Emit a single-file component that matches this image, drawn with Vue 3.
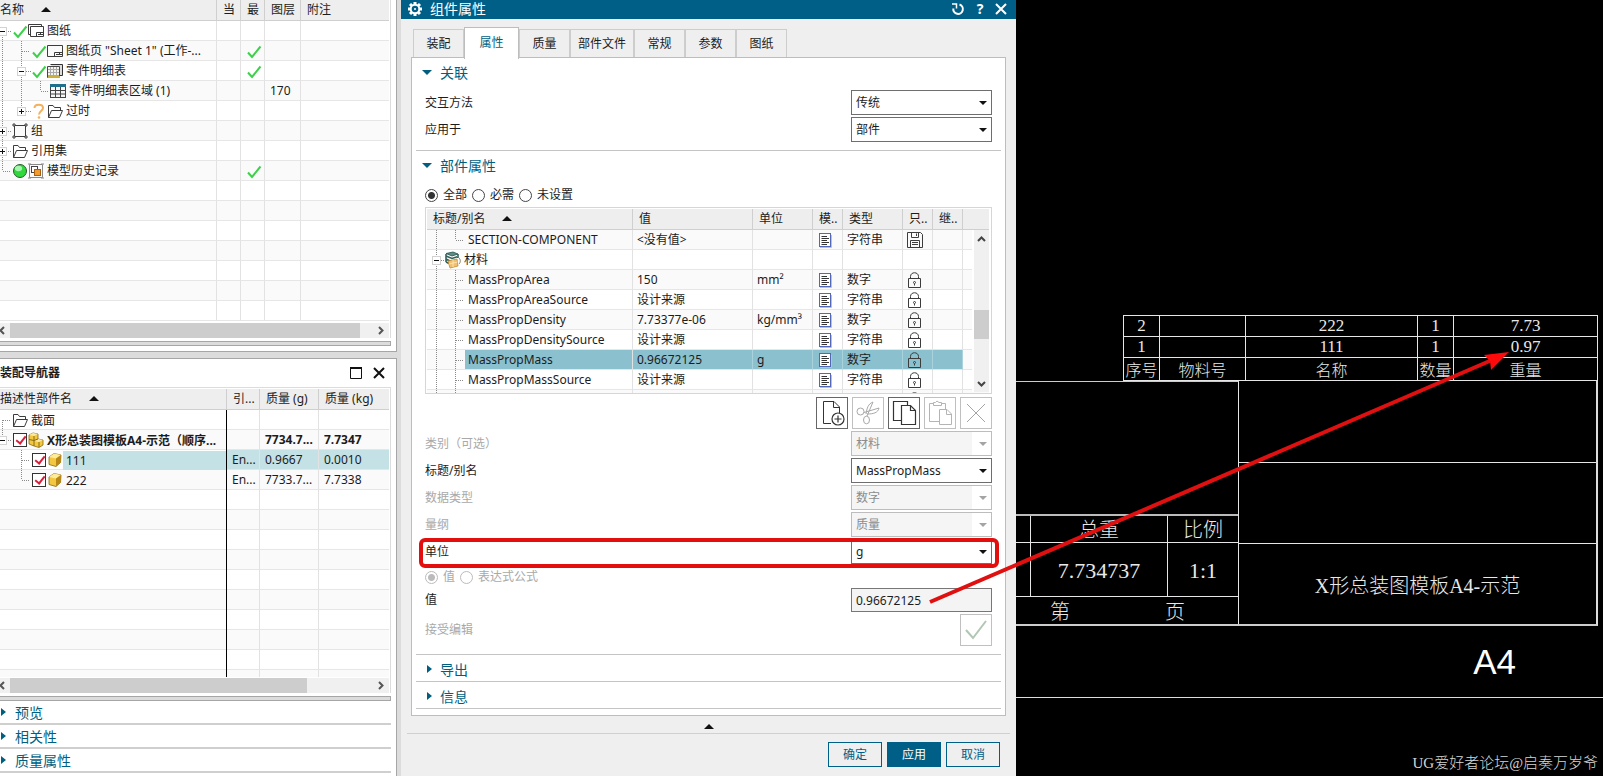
<script setup>
import { h, ref } from 'vue'

const el = (tag, attrs) => h(tag, attrs)
const line = { fill: 'none', stroke: '#3c3c3c', 'stroke-width': 1 }

const shapes = {
  check: [el('path', { d: 'M2 9.5L6 14L14.500 3.500', fill: 'none', stroke: '#3fd04b', 'stroke-width': 2 })],
  sheets: [
    el('path', { d: 'M2.500 11.500H0.500V1.500H13.500V3', ...line }),
    el('path', { d: 'M2.500 3.500H15.500V13.500H2.500Z', ...line }),
    el('path', { d: 'M8.500 13V9.500H15M10 11.500H15M12.500 10V11.500', ...line })
  ],
  sheet: [
    el('path', { d: 'M0.500 2.500H15.500V13.500H0.500Z', ...line }),
    el('path', { d: 'M7.500 13V9.500H15M9 11.500H15M12.500 10V11.500', ...line })
  ],
  parts: [
    el('path', { d: 'M3.500 1.500H15.500V12.500H12.500', fill: '#ddd', stroke: '#333', 'stroke-width': 1 }),
    el('path', { d: 'M0.500 3.500H12.500V14.500H0.500Z', fill: '#f4f4ee', stroke: '#444', 'stroke-width': 1 }),
    el('path', { d: 'M1 6.500H12M1 9.500H12M1 12.500H12M3.500 4V14M6.500 4V14M9.500 4V14', fill: 'none', stroke: '#aaa', 'stroke-width': 1 }),
    el('path', { d: 'M1 14H13', stroke: '#c9b13c', 'stroke-width': 2 })
  ],
  grid: [
    el('rect', { x: 0.5, y: 1.5, width: 15, height: 13, fill: '#f6f6f6', stroke: '#444' }),
    el('rect', { x: 0, y: 1, width: 16, height: 3, fill: '#1f6f8d' }),
    el('path', { d: 'M0 7.500H16M0 11H16M5.500 4V15M10.500 4V15', fill: 'none', stroke: '#444', 'stroke-width': 1 })
  ],
  folder: [
    el('path', { d: 'M1.500 14.500V2.500H6L7.500 4.500H13.500V7.500', ...line }),
    el('path', { d: 'M1.500 14.500L4.500 7.500H15.500L12.500 14.500Z', ...line })
  ],
  question: [
    el('path', { d: 'M3.500 5C3.500 0.500 12 0.500 12 5C12 8 8 8 8 11.500', fill: 'none', stroke: '#f3b15c', 'stroke-width': 2 }),
    el('circle', { cx: 8, cy: 14.5, r: 1.3, fill: '#f3b15c' })
  ],
  group: [
    el('path', { d: 'M2.500 2.500H13.500V13.500H2.500Z', ...line }),
    el('path', { d: 'M1 1H3V3H1ZM13 1H15V3H13ZM1 13H3V15H1ZM13 13H15V15H13Z', fill: '#fff', stroke: '#3c3c3c', 'stroke-width': 1 })
  ],
  ball: [
    el('circle', { cx: 8, cy: 8, r: 6.5, fill: '#2fd83c', stroke: '#2b5a2e' }),
    el('ellipse', { cx: 6.5, cy: 5.5, rx: 3.6, ry: 2.8, fill: '#a8f5ad' })
  ],
  history: [
    el('path', { d: 'M1.500 3V1.500H14.500V14.500H1.500V3M0 1H3M13 1H16M0 15H3M13 15H16', fill: 'none', stroke: '#888', 'stroke-width': 1 }),
    el('rect', { x: 3.5, y: 3.5, width: 6, height: 6, fill: '#fff', stroke: '#444' }),
    el('rect', { x: 6.5, y: 6.5, width: 6, height: 6, fill: '#f29a2e', stroke: '#a85f10' })
  ],
  cube: [
    el('path', { d: 'M2 5L7 1.500L14 3L13.500 10.500L9 14.500L2 12.500Z', fill: '#f3c840', stroke: '#8a6a12', 'stroke-width': 0.8 }),
    el('path', { d: 'M2 5L9 6.500L14 3L7 1.500Z', fill: '#fdeb9c' }),
    el('path', { d: 'M9 6.500L14 3L13.500 10.500L9 14.500Z', fill: '#b98716' })
  ],
  assembly: [
    el('path', { d: 'M1 3L5 1L10 2V7L15 8V13L11 15.500L6 14L1 12Z', fill: '#f3c840', stroke: '#8a6a12', 'stroke-width': 0.8 }),
    el('path', { d: 'M1 3L6 4L10 2L5 1ZM6 9L11 10L15 8L10 7Z', fill: '#fdeb9c' }),
    el('path', { d: 'M6 4V14M1 7.500L6 8.500L10 7M11 10V15', fill: 'none', stroke: '#8a6a12', 'stroke-width': 1 })
  ],
  material: [
    el('path', { d: 'M1 1.500L8 0L13 2L7 4Z', fill: '#5d8c86', stroke: '#26504c', 'stroke-width': 0.8 }),
    el('path', { d: 'M1 4L7 6.500L13 4.500M1 7L6 9.500M1 10L4 11.500M1 2V10M13 2V6', fill: 'none', stroke: '#33625d', 'stroke-width': 1.6 }),
    el('path', { d: 'M3 9L12 7L13 14L5 16Z', fill: '#f0c070', stroke: '#c48a2f', 'stroke-width': 0.8 }),
    el('path', { d: 'M4 12L12.500 10M8 8V15', fill: 'none', stroke: '#fbe3b0', 'stroke-width': 1 }),
    el('path', { d: 'M12 4C16 7 16 10 14 12', fill: 'none', stroke: '#8a7a50', 'stroke-width': 1 })
  ],
  doc: [
    el('path', { d: 'M3 15.500H14.500V3', fill: 'none', stroke: '#b4bfe8', 'stroke-width': 1 }),
    el('rect', { x: 2.5, y: 1.5, width: 11, height: 13, fill: '#fff', stroke: '#5267b5' }),
    el('path', { d: 'M4.500 4.500H10M4.500 6.500H12M4.500 8.500H10M4.500 10.500H12M4.500 12.500H10', fill: 'none', stroke: '#333', 'stroke-width': 1 })
  ],
  lock: [
    el('path', { d: 'M1.500 6.500H13.500V15.500H1.500Z', ...line }),
    el('path', { d: 'M3.500 6.500V4.500C3.500 -0.500 11.500 -0.500 11.500 4.500V6.500', ...line }),
    el('path', { d: 'M7.500 12V13.500', ...line }),
    el('circle', { cx: 7.5, cy: 10.5, r: 1, ...line })
  ],
  disk: [
    el('path', { d: 'M0.500 0.500H13.500L15.500 2.500V15.500H0.500Z', ...line }),
    el('path', { d: 'M4.500 0.500V5.500H11.500V0.500M9.500 1.500V4M3.500 15.500V8.500H12.500V15.500M5 10.500H11M5 12.500H11', ...line })
  ]
}
const Icon = (props) => h('svg', { width: 16, height: 16, viewBox: '0 0 16 16', 'aria-hidden': 'true', overflow: 'visible' }, shapes[props.name])
Icon.props = ['name']

/* Tree guide: v = [x, top, bottom] dotted verticals, b = [x, sign] toggle box */
const Guide = (props) => {
  const g = props.g
  const dots = { stroke: '#8a8a8a', 'stroke-width': 1, 'stroke-dasharray': '1 1' }
  const parts = g.v.map(([x, a, b]) => el('path', { d: `M${x + 0.5} ${a}V${b}`, ...dots }))
  if (g.h) parts.push(el('path', { d: `M${g.h[0]} 10.500H${g.h[1]}`, ...dots }))
  if (g.b) {
    const x = g.b[0] + 0.5
    parts.push(el('rect', { x: x - 4, y: 6.5, width: 8, height: 8, fill: '#fff', stroke: '#d2d2d2' }))
    parts.push(el('path', { d: `M${x - 2.5} 10.500H${x + 2.5}` + (g.b[1] === '+' ? `M${x} 8V13` : ''), stroke: '#111', 'stroke-width': 1 }))
  }
  return h('svg', { width: g.w, height: 20, viewBox: `0 0 ${g.w} 20`, overflow: 'visible', 'aria-hidden': 'true' }, parts)
}
Guide.props = ['g']

const drawingRows = [
  { g: { w: 12, v: [[2, 10, 20]], h: [8, 12], b: [2, '-'] }, icons: ['check', 'sheets'], name: '图纸' },
  { g: { w: 31, v: [[2, 0, 20], [21, 0, 20]], h: [22, 30] }, icons: ['check', 'sheet'], name: '图纸页 "Sheet 1" (工作-...', ok: true },
  { g: { w: 31, v: [[2, 0, 20], [21, 0, 20]], h: [26, 31], b: [21, '-'] }, icons: ['check', 'parts'], name: '零件明细表', ok: true },
  { g: { w: 50, v: [[2, 0, 20], [21, 0, 20], [40, 0, 10]], h: [41, 49] }, icons: ['grid'], name: '零件明细表区域 (1)', layer: '170' },
  { g: { w: 31, v: [[2, 0, 20], [21, 0, 10]], h: [26, 31], b: [21, '+'] }, icons: ['question', 'folder'], name: '过时' },
  { g: { w: 12, v: [[2, 0, 20]], h: [8, 12], b: [2, '+'] }, icons: ['group'], name: '组' },
  { g: { w: 12, v: [[2, 0, 20]], h: [8, 12], b: [2, '+'] }, icons: ['folder'], name: '引用集' },
  { g: { w: 12, v: [[2, 0, 10]], h: [3, 11] }, icons: ['ball', 'history'], name: '模型历史记录', ok: true }
]
const partRows = [
  { g: { w: 12, v: [[2, 10, 20]], h: [3, 11] }, icon: 'folder', name: '截面' },
  { g: { w: 12, v: [[2, 0, 8]], h: [8, 12], b: [2, '-'] }, box: true, icon: 'assembly', name: 'X形总装图模板A4-示范（顺序...', ref: '', grams: '7734.7...', kg: '7.7347', bold: true },
  { g: { w: 31, v: [[21, 0, 20]], h: [22, 30] }, box: true, icon: 'cube', name: '111', ref: 'En...', grams: '0.9667', kg: '0.0010', on: true },
  { g: { w: 31, v: [[21, 0, 10]], h: [22, 30] }, box: true, icon: 'cube', name: '222', ref: 'En...', grams: '7733.7...', kg: '7.7338' }
]
const child = { w: 38, v: [[9, 0, 20], [28, 0, 20]], h: [29, 37] }
const attrRows = [
  { g: { w: 38, v: [[9, 0, 20], [28, 0, 10]], h: [29, 37] }, name: 'SECTION-COMPONENT', value: '<没有值>', type: '字符串', mark: 'disk' },
  { g: { w: 18, v: [[9, 0, 20]], h: [14, 18], b: [9, '-'] }, name: '材料', folder: true },
  { g: child, name: 'MassPropArea', value: '150', unit: 'mm²', type: '数字', mark: 'lock' },
  { g: child, name: 'MassPropAreaSource', value: '设计来源', type: '字符串', mark: 'lock' },
  { g: child, name: 'MassPropDensity', value: '7.73377e-06', unit: 'kg/mm³', type: '数字', mark: 'lock' },
  { g: child, name: 'MassPropDensitySource', value: '设计来源', type: '字符串', mark: 'lock' },
  { g: child, name: 'MassPropMass', value: '0.96672125', unit: 'g', type: '数字', mark: 'lock', on: true },
  { g: child, name: 'MassPropMassSource', value: '设计来源', type: '字符串', mark: 'lock' },
  { g: { w: 38, v: [[9, 0, 20], [28, 0, 20]] }, name: '', type: '', mark: 'lock' }
]
const tabs = ['装配', '属性', '质量', '部件文件', '常规', '参数', '图纸']
const activeTab = ref('属性')
const relation = [
  { id: 'method', label: '交互方法', value: '传统' },
  { id: 'target', label: '应用于', value: '部件' }
]
const fields = [
  { id: 'category', label: '类别（可选）', value: '材料', off: true },
  { id: 'alias', label: '标题/别名', value: 'MassPropMass' },
  { id: 'datatype', label: '数据类型', value: '数字', off: true },
  { id: 'dimension', label: '量纲', value: '质量', off: true },
  { id: 'unit', label: '单位', value: 'g' }
]
const filter = ref('全部')
const bom = [
  ['2', '', '222', '1', '7.73'],
  ['1', '', '111', '1', '0.97'],
  ['序号', '物料号', '名称', '数量', '重量']
]
</script>

<template>
  <main class="desk">
    <aside class="side">
      <section class="panel top">
        <div class="frame">
          <table class="tree">
            <colgroup><col /><col class="c24" /><col class="c24" /><col class="c36" /><col class="c88" /></colgroup>
            <thead>
              <tr><th class="first">名称<i class="sort"></i></th><th>当</th><th>最</th><th>图层</th><th>附注</th></tr>
            </thead>
            <tbody>
              <tr v-for="r in drawingRows" :key="r.name">
                <td class="first"><div class="node"><Guide :g="r.g" /><Icon v-for="i in r.icons" :key="i" :name="i" /><span class="name">{{ r.name }}</span></div></td>
                <td></td>
                <td><div v-if="r.ok" class="node"><Icon name="check" /></div></td>
                <td>{{ r.layer }}</td><td></td>
              </tr>
              <tr v-for="n in 7" :key="n"><td></td><td></td><td></td><td></td><td></td></tr>
            </tbody>
          </table>
          <div class="hbar">
            <svg width="10" height="15" viewBox="0 0 10 15"><path d="M4 4L0.500 7.500L4 11" fill="none" stroke="#555" stroke-width="2" /></svg>
            <span class="thumb long"></span>
            <svg class="end" width="16" height="15" viewBox="0 0 16 15"><path d="M6 4L9.500 7.500L6 11" fill="none" stroke="#555" stroke-width="2" /></svg>
          </div>
        </div>
        <div class="sash"></div>
      </section>

      <section class="panel bottom">
        <header class="dock">
          <strong>装配导航器</strong>
          <button type="button" aria-label="最大化"><svg width="12" height="12" viewBox="0 0 12 12"><path d="M0.500 1H11.500V11.500H0.500Z" fill="none" stroke="#111" /><path d="M0 1H12" stroke="#111" stroke-width="2" /></svg></button>
          <button type="button" aria-label="关闭"><svg width="12" height="12" viewBox="0 0 12 12"><path d="M1 1L11 11M11 1L1 11" stroke="#111" stroke-width="2" /></svg></button>
        </header>
        <div class="frame fill">
          <div class="clip">
            <table class="tree parts">
              <colgroup><col /><col class="c33" /><col class="c59" /><col class="c70" /></colgroup>
              <thead>
                <tr><th class="first">描述性部件名<i class="sort"></i></th><th>引...</th><th>质量 (g)</th><th>质量 (kg)</th></tr>
              </thead>
              <tbody>
                <tr v-for="r in partRows" :key="r.name" :class="{ bold: r.bold, on: r.on }">
                  <td class="first"><div class="node"><Guide :g="r.g" /><input v-if="r.box" type="checkbox" class="tick" checked :aria-label="r.name" /><Icon :name="r.icon" /><span class="name">{{ r.name }}</span></div></td>
                  <td>{{ r.ref }}</td><td>{{ r.grams }}</td><td>{{ r.kg }}</td>
                </tr>
                <tr v-for="n in 10" :key="n"><td></td><td></td><td></td><td></td></tr>
              </tbody>
            </table>
          </div>
          <div class="hbar">
            <svg width="10" height="15" viewBox="0 0 10 15"><path d="M4 4L0.500 7.500L4 11" fill="none" stroke="#555" stroke-width="2" /></svg>
            <span class="thumb short"></span>
            <svg class="end" width="16" height="15" viewBox="0 0 16 15"><path d="M6 4L9.500 7.500L6 11" fill="none" stroke="#555" stroke-width="2" /></svg>
          </div>
        </div>
        <div class="sash"></div>
        <button v-for="t in ['预览', '相关性', '质量属性']" :key="t" type="button" class="fold">{{ t }}</button>
      </section>
    </aside>

    <section class="dialog">
      <header class="title">
        <svg width="14" height="14" viewBox="0 0 14 14"><circle cx="7" cy="7" r="4.300" fill="none" stroke="#fff" stroke-width="2" /><circle cx="7" cy="7" r="1" fill="#fff" /><path d="M7 0V2.500M7 11.500V14M0 7H2.500M11.500 7H14M2 2L3.800 3.800M10.200 10.200L12 12M12 2L10.200 3.800M3.800 10.200L2 12" stroke="#fff" stroke-width="3" /></svg>
        <h1>组件属性</h1>
        <button type="button" aria-label="重置"><svg width="14" height="14" viewBox="0 0 14 14"><path d="M8.500 2.500A4.800 4.800 0 1 1 2.300 6.500" fill="none" stroke="#fff" stroke-width="2" /><path d="M1 2H5.500V6.500" fill="none" stroke="#fff" stroke-width="1.500" /></svg></button>
        <button type="button" class="help">?</button>
        <button type="button" aria-label="关闭"><svg width="12" height="12" viewBox="0 0 12 12"><path d="M1 1L11 11M11 1L1 11" stroke="#fff" stroke-width="2" /></svg></button>
      </header>
      <nav class="tabs">
        <button v-for="t in tabs" :key="t" type="button" :class="{ active: t === activeTab }" @click="activeTab = t">{{ t }}</button>
      </nav>
      <div class="sheet">
        <h2>关联</h2>
        <div v-for="f in relation" :key="f.id" class="field">
          <label :for="f.id">{{ f.label }}</label>
          <span class="pick"><select :id="f.id"><option>{{ f.value }}</option></select></span>
        </div>
        <hr class="after-fields" />
        <h2>部件属性</h2>
        <div class="radios">
          <label v-for="o in ['全部', '必需', '未设置']" :key="o"><input v-model="filter" type="radio" name="filter" :value="o" />{{ o }}</label>
        </div>
        <div class="attrs">
          <table>
            <colgroup><col /><col class="c120" /><col class="c60" /><col class="c30" /><col class="c60" /><col class="c30" /><col class="c30" /><col class="c26" /></colgroup>
            <thead>
              <tr><th class="first">标题/别名<i class="sort"></i></th><th>值</th><th>单位</th><th>模..</th><th>类型</th><th>只..</th><th>继..</th><th></th></tr>
            </thead>
            <tbody>
              <tr v-for="(r, i) in attrRows" :key="i" :class="{ on: r.on }">
                <td class="first"><div class="node"><Guide :g="r.g" /><Icon v-if="r.folder" name="material" /><span class="name">{{ r.name }}</span></div></td>
                <td>{{ r.value }}</td><td>{{ r.unit }}</td>
                <td><div v-if="r.type" class="node"><Icon name="doc" /></div></td>
                <td>{{ r.type }}</td>
                <td><div v-if="r.mark" class="node"><Icon :name="r.mark" /></div></td>
                <td></td><td class="last"></td>
              </tr>
            </tbody>
          </table>
          <div class="vbar">
            <svg width="15" height="18" viewBox="0 0 15 18"><path d="M4 11L7.500 7.500L11 11" fill="none" stroke="#444" stroke-width="2" /></svg>
            <span></span>
            <svg width="15" height="18" viewBox="0 0 15 18"><path d="M4 8L7.500 11.500L11 8" fill="none" stroke="#444" stroke-width="2" /></svg>
          </div>
        </div>
        <div class="tools">
          <button type="button" aria-label="新建"><svg width="30" height="30" viewBox="0 0 30 30"><path d="M14 25.500H6.500V3.500H17L22.500 9V15M16.500 4V9.500H22" fill="none" stroke="#333" /><circle cx="21" cy="21" r="6" fill="#fff" stroke="#333" stroke-width="1.200" /><path d="M17.500 21H24.500M21 17.500V24.500" stroke="#333" stroke-width="1.200" /></svg></button>
          <button type="button" disabled aria-label="剪切"><svg width="30" height="30" viewBox="0 0 30 30"><g fill="none" stroke="#a8a8a8"><circle cx="7.500" cy="13.500" r="3.500" /><ellipse cx="13.500" cy="22" rx="3" ry="3.800" /><path d="M11 14.500L26 10C25 15 20 16 14 16M14 18L20 4C15 6 14 10 13 16" /></g></svg></button>
          <button type="button" aria-label="复制"><svg width="30" height="30" viewBox="0 0 30 30"><path d="M4.500 3.500H18.500V22.500H4.500Z" fill="#fff" stroke="#333" stroke-width="1.200" /><path d="M12.500 7.500H21.500L26.500 12.500V26.500H12.500Z" fill="#fff" stroke="#333" stroke-width="1.200" /><path d="M21.500 8V12.500H26" fill="none" stroke="#333" stroke-width="1.200" /></svg></button>
          <button type="button" disabled aria-label="粘贴"><svg width="30" height="30" viewBox="0 0 30 30"><path d="M14 23.500H4.500V5.500H8M17 5.500H20.500V12M8.500 7.500V4.500H10.500L12 3L14 4.500H16.500V7.500ZM14.500 11.500H22L26.500 16V26.500H14.500ZM21.500 12V16.500H26" fill="none" stroke="#b4b4b4" /></svg></button>
          <button type="button" disabled aria-label="删除"><svg width="30" height="30" viewBox="0 0 30 30"><path d="M6 6L24 24M24 6L6 24" stroke="#a4a4a4" /></svg></button>
        </div>
        <div v-for="f in fields" :key="f.id" class="field" :class="{ off: f.off }">
          <label :for="f.id">{{ f.label }}</label>
          <span class="pick"><select :id="f.id" :disabled="f.off"><option>{{ f.value }}</option></select></span>
        </div>
        <div class="radios off">
          <label><input type="radio" name="kind" checked disabled />值</label>
          <label><input type="radio" name="kind" disabled />表达式公式</label>
        </div>
        <div class="field">
          <label for="value">值</label>
          <input id="value" class="text" type="text" value="0.96672125" readonly />
        </div>
        <div class="field off accept">
          <span>接受编辑</span>
          <button type="button" disabled aria-label="接受编辑"><svg width="30" height="30" viewBox="0 0 30 30"><path d="M5 15L12 23L25 6" fill="none" stroke="#b2c6b4" stroke-width="2" /></svg></button>
        </div>
        <hr />
        <button type="button" class="fold">导出</button>
        <hr />
        <button type="button" class="fold">信息</button>
        <hr />
      </div>
      <div class="collapse"><i class="sort"></i></div>
      <footer class="actions">
        <button type="button">确定</button>
        <button type="button" class="primary">应用</button>
        <button type="button">取消</button>
      </footer>
    </section>

    <section class="drawing">
      <table class="bom">
        <colgroup><col class="c36" /><col class="c86" /><col /><col class="c36" /><col class="c144" /></colgroup>
        <tbody>
          <tr v-for="r in bom" :key="r[0]"><td v-for="(c, i) in r" :key="i">{{ c }}</td></tr>
        </tbody>
      </table>
      <div class="block">
        <div class="left">
          <div class="blank"></div>
          <div class="cells">
            <span></span><span>总重</span><span>比例</span>
            <span></span><span class="num">7.734737</span><span class="num">1:1</span>
          </div>
          <div class="pageno"><span>第</span><span>页</span></div>
        </div>
        <div class="right">
          <div></div><div></div><div>X形总装图模板A4-示范</div>
        </div>
      </div>
      <div class="format">A4</div>
      <div class="mark">UG爱好者论坛@启奏万岁爷</div>
    </section>

    <svg class="notes" viewBox="0 0 1603 776" preserveAspectRatio="none" aria-hidden="true">
      <rect x="421" y="540" width="576" height="26" rx="4" fill="none" stroke="#e30f0f" stroke-width="4" />
      <path d="M930 602L1492 360" stroke="#e01010" stroke-width="4" />
      <path d="M1509 352L1484 355L1490 361L1491 370Z" fill="#ff0a0a" />
    </svg>
  </main>
</template>

<style>
body { margin: 0; background: #dcdcdc; }
</style>

<style scoped>
.desk { position: relative; display: grid; grid-template-columns: 401fr 615fr 587fr; height: 100vh; min-height: 776px; overflow: hidden; font: 12px/18px "Noto Sans", "Noto Sans CJK SC", sans-serif; color: #1c1c1c; }
.desk * { box-sizing: border-box; }
button, select, input { font: inherit; color: inherit; margin: 0; padding: 0; border: 0; background: none; border-radius: 0; }
svg { display: block; flex: none; }
table { width: 100%; table-layout: fixed; border-collapse: separate; border-spacing: 0; }
th { font-weight: 400; text-align: left; }
.c24 { width: 24px; } .c26 { width: 26px; } .c30 { width: 30px; } .c33 { width: 33px; } .c36 { width: 36px; } .c59 { width: 59px; } .c60 { width: 60px; }
.c70 { width: 70px; } .c86 { width: 86px; } .c88 { width: 88px; } .c120 { width: 120px; } .c144 { width: 144px; }

.side { display: flex; flex-direction: column; gap: 6px; background: #dcdcdc; padding-right: 4px; min-width: 0; min-height: 0; }
.panel { background: #fff; border-right: 1px solid #a6a6a6; padding-right: 5px; }
.top { border-bottom: 1px solid #a6a6a6; padding-bottom: 5px; }
.bottom { flex: 1; min-height: 0; border-top: 1px solid #a6a6a6; display: flex; flex-direction: column; padding-bottom: 3px; }
.frame { border-right: 1px solid #dcdcdc; padding-right: 1px; }
.fill { flex: 1; min-height: 0; display: flex; flex-direction: column; border-top: 1px solid #dcdcdc; padding-top: 1px; }
.clip { flex: 1; min-height: 0; overflow: hidden; }
.tree th, .attrs th { height: 21px; line-height: 20px; background: #eee; border-bottom: 1px solid #cfcfcf; border-right: 1px solid #cfcfcf; padding: 0 0 0 6px; white-space: nowrap; }
.tree td, .attrs td { height: 20px; line-height: 19px; border-bottom: 1px solid #e6e6e6; border-right: 1px solid #e2e2e2; padding: 0 0 0 5px; white-space: nowrap; overflow: hidden; }
.attrs td { padding-left: 4px; }
.tree tbody tr:nth-child(even), .attrs tbody tr:nth-child(odd) { background: #fafafa; }
.tree th:last-child, .tree td:last-child { border-right: 0; }
.tree th.first, .tree td.first, .attrs td.first { padding-left: 0; }
.sort { display: inline-block; border: 5px solid transparent; border-top: 0; border-bottom: 5px solid #111; margin-left: 17px; vertical-align: 2px; }
.node { display: flex; align-items: center; height: 19px; }
.name { flex: 1; padding-left: 3px; height: 19px; }
.parts .name { overflow: hidden; }
.parts tbody td:first-child { border-right: 1px solid #000; border-bottom: 0; box-shadow: inset 0 -1px #e6e6e6; }
.bold { font-weight: 700; }
.parts .on td:not(.first), .parts .on .name { background: #c4e1e5; }
.tick { appearance: none; flex: none; width: 14px; height: 14px; margin: 0 1px; border: 1px solid #333; background: #fff; position: relative; }
.tick:checked::after { content: ""; position: absolute; left: 4px; top: 0; width: 4px; height: 8px; border: solid #d81e3a; border-width: 0 2px 2px 0; transform: rotate(38deg); }
.hbar { display: flex; height: 15px; background: #f0f0f0; }
.top .hbar { margin-top: 2px; }
.bottom .hbar { margin-top: 1px; }
.thumb { background: #cdcdcd; }
.long { width: 350px; } .short { width: 297px; }
.end { margin-left: auto; }
.sash { height: 5px; margin-top: 3px; flex: none; background: #dcdcdc; border: 1px solid #a6a6a6; border-left: 0; }
.dock { height: 28px; display: flex; align-items: center; gap: 11px; padding-right: 6px; }
.dock strong { flex: 1; }
.fold { display: block; text-align: left; width: 100%; font-size: 14px; color: #005f7f; }
.fold::before { content: ""; display: inline-block; border: 4px solid transparent; border-left: 5px solid #005f7f; border-right: 0; margin-right: 9px; vertical-align: 2px; }
.bottom > .fold { flex: none; height: 24px; line-height: 20px; padding: 2px 0 0 1px; border-bottom: 2px solid #cfcfcf; }

.dialog { background: #efefef; display: flex; flex-direction: column; min-width: 0; }
.title { height: 19px; background: #005f87; color: #fff; display: flex; align-items: center; gap: 8px; padding: 0 9px 2px 7px; }
.title h1 { font-size: 14px; line-height: 17px; font-weight: 400; margin: 0; flex: 1; }
.help { font-weight: 700; font-size: 14px; line-height: 17px; width: 14px; }
.tabs { display: flex; align-items: flex-end; height: 38px; padding-left: 12px; }
.tabs button { min-width: 51px; height: 28px; padding: 0 7px; border: 1px solid #cdcdcd; border-bottom: 0; }
.tabs .active { min-width: 55px; height: 32px; margin-bottom: -2px; background: #fff; color: #005f7f; border-color: #bdbdbd; z-index: 1; padding-bottom: 2px; }
.sheet { background: #fff; border: 1px solid #bdbdbd; margin: 0 10px; padding: 0 13px 6px; }
h2 { margin: 0; height: 32px; font-size: 14px; line-height: 30px; font-weight: 400; color: #005f7f; }
h2::before { content: ""; display: inline-block; border: 5px solid transparent; border-top: 5px solid #005f7f; border-bottom: 0; margin: 0 8px 0 -3px; vertical-align: 3px; }
.field { display: flex; justify-content: space-between; align-items: center; margin-bottom: 2px; }
.pick { position: relative; display: block; width: 141px; }
.pick select { appearance: none; display: block; width: 100%; height: 25px; padding: 0 4px; border: 1px solid #6e6e6e; background: #fff; opacity: 1; }
.pick::after { content: ""; position: absolute; right: 5px; top: 11px; border: 4px solid transparent; border-top: 4px solid #111; border-bottom: 0; }
.off { color: #a9a9a9; }
.off .pick select { color: #8c8c8c; background: linear-gradient(to left, #fff 19px, #f5f5f5 19px); border-color: #bdbdbd; }
.off .pick::after { border-top-color: #a4a4a4; }
hr { border: 0; height: 1px; background: #c4c4c4; margin: 0 -9px; }
.after-fields { margin-top: 8px; }
.radios { display: flex; align-items: center; gap: 5px; height: 24px; }
.radios label { display: flex; align-items: center; gap: 5px; }
.radios input { appearance: none; width: 13px; height: 13px; border: 1px solid #444; border-radius: 50%; background: #fff; }
.radios input:checked { background: radial-gradient(circle, #333 3px, #fff 4px); }
.radios.off { height: 22px; }
.radios.off input { border-color: #bbb; }
.radios.off input:checked { background: radial-gradient(circle, #bbb 3px, #fff 4px); }
.attrs { position: relative; height: 187px; overflow: hidden; border: 1px solid #d6d6d6; padding: 1px 2px 1px 1px; }
.attrs thead th:last-child, .attrs td.last { border-right: 0; }
.attrs .on td:not(.first):not(.last), .attrs .on .name { background: #8bc1cf; border-right-color: #a9d2dc; }
.vbar { position: absolute; top: 22px; right: 2px; bottom: 1px; width: 17px; border-left: 2px solid #fff; background: #f0f0f0; display: flex; flex-direction: column; }
.vbar span { height: 29px; margin: 62px 0 auto; background: #cdcdcd; }
.tools { display: flex; justify-content: flex-end; gap: 4px; margin: 3px 0 2px; }
.tools button, .accept button { width: 32px; height: 32px; border: 1px solid #666; background: #fff; }
.tools button:disabled, .accept button:disabled { border-color: #c0c0c0; }
.text { width: 141px; height: 24px; padding: 0 4px; border: 1px solid #777; background: #f4f4f4; }
.accept { margin-bottom: 8px; }
.sheet .fold { height: 26px; line-height: 22px; padding: 4px 0 0 2px; }
.sheet .fold::before { margin-right: 8px; }
.collapse { display: flex; justify-content: center; align-items: flex-end; height: 18px; margin: 0 6px; padding-bottom: 4px; border-bottom: 1px solid #d0d0d0; }
.collapse .sort { margin: 0; }
.actions { display: flex; justify-content: flex-end; gap: 5px; padding: 8px 16px; }
.actions button { width: 54px; height: 25px; border: 1px solid #005f87; color: #005f87; }
.actions .primary { background: #005f87; color: #fff; }

.drawing { background: #000; color: #e8e8e8; display: flex; flex-direction: column; min-width: 0; padding-top: 315px; font: 300 20px/24px "Liberation Serif", "Noto Sans CJK SC", serif; }
.bom { width: auto; margin: 0 5px 0 107px; border-collapse: collapse; font-size: 16px; line-height: 18px; }
.bom td { height: 21px; padding: 0; text-align: center; border: 1px solid #e6e6e6; white-space: nowrap; }
.bom tr:not(:last-child) td { font-size: 17px; }
.bom tr:last-child td { height: 23px; padding-top: 3px; }
.block { display: grid; grid-template-columns: 223px 1fr; margin-right: 5px; border-right: 2px solid #ddd; border-bottom: 2px solid #ccc; }
.left { border-right: 1px solid #e6e6e6; display: flex; flex-direction: column; border-top: 1px solid #ccc; }
.blank { height: 134px; border-bottom: 2px solid #bbb; }
.cells { display: grid; grid-template-columns: 15px 137px 1fr; grid-template-rows: 27px 54px; }
.cells span { border-right: 1px solid #e6e6e6; border-bottom: 1px solid #e6e6e6; display: grid; place-items: center; padding-top: 2px; }
.cells span:nth-child(3n) { border-right: 0; }
.num { font-size: 22px; }
.pageno { height: 27px; display: flex; align-items: center; gap: 95px; padding: 2px 0 0 34px; }
.right { display: grid; grid-template-rows: 82px 81px 1fr; }
.right div { display: grid; place-items: center; border-bottom: 1px solid #e6e6e6; }
.right div:last-child { border-bottom: 0; padding-top: 4px; }
.format { height: 72px; border-bottom: 1px solid #ddd; padding-right: 87px; display: flex; align-items: center; justify-content: flex-end; color: #fff; font: 35px/40px "Liberation Sans", sans-serif; }
.mark { margin-top: auto; padding: 0 5px 3px; text-align: right; font-size: 15px; line-height: 20px; color: #d6d6d6; }
.notes { position: absolute; inset: 0; width: 100%; height: 100%; pointer-events: none; }
</style>
